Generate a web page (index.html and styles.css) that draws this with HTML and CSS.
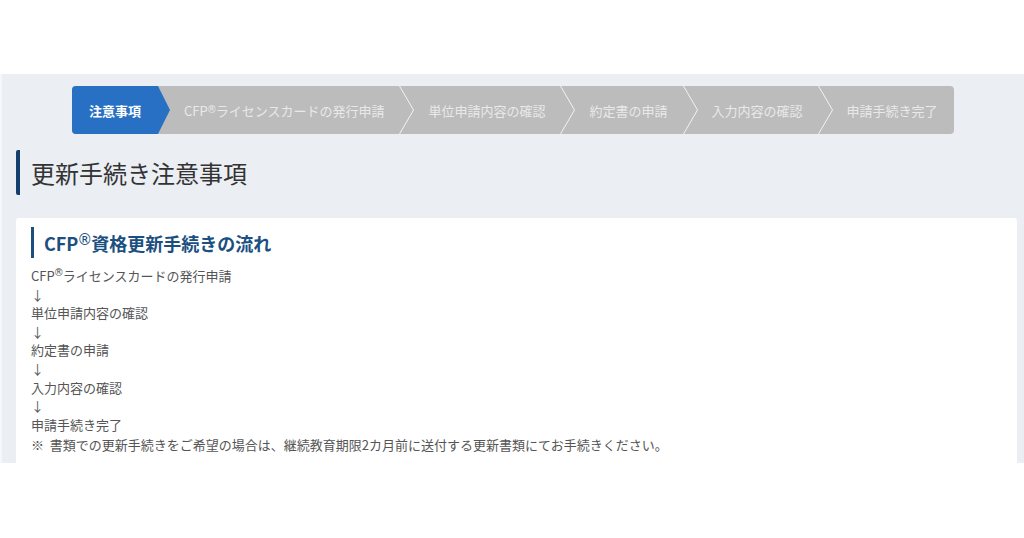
FILE: index.html
```html
<!DOCTYPE html>
<html lang="ja">
  <head>
    <meta charset="UTF-8" />
    <title>更新手続き注意事項</title>
    <link rel="stylesheet" href="styles.css">
  </head>
  <body>
    <div class="top-space"></div>

    <div class="screen">
      <!-- Progress steps -->
      <div class="steps">
        <div class="step active">注意事項</div>
        <div class="step">CFP<sup>®</sup>ライセンスカードの発行申請</div>
        <span class="sep"><svg viewBox="0 0 15 48" width="15" height="48"><polyline points="0.5,0 14.5,24 0.5,48" /></svg></span>
        <div class="step">単位申請内容の確認</div>
        <span class="sep"><svg viewBox="0 0 15 48" width="15" height="48"><polyline points="0.5,0 14.5,24 0.5,48" /></svg></span>
        <div class="step">約定書の申請</div>
        <span class="sep"><svg viewBox="0 0 15 48" width="15" height="48"><polyline points="0.5,0 14.5,24 0.5,48" /></svg></span>
        <div class="step">入力内容の確認</div>
        <span class="sep"><svg viewBox="0 0 15 48" width="15" height="48"><polyline points="0.5,0 14.5,24 0.5,48" /></svg></span>
        <div class="step last">申請手続き完了</div>
      </div>

      <!-- Page title -->
      <h1 class="page-title">更新手続き注意事項</h1>

      <!-- Card -->
      <div class="card">
        <h2 class="card-title">CFP<sup>®</sup>資格更新手続きの流れ</h2>
        <p class="flow">
          CFP<sup>®</sup>ライセンスカードの発行申請<br />
          ↓<br />
          単位申請内容の確認<br />
          ↓<br />
          約定書の申請<br />
          ↓<br />
          入力内容の確認<br />
          ↓<br />
          申請手続き完了
        </p>
        <p class="note">※&nbsp;&nbsp;書類での更新手続きをご希望の場合は、継続教育期限2カ月前に送付する更新書類にてお手続きください。</p>
      </div>
    </div>
  </body>
</html>
```

FILE: styles.css
```css
body {
  font-family: "Noto Sans CJK JP", "Noto Sans", sans-serif;
  background: #ffffff;
  margin: 0;
  padding: 0;
}

.top-space {
  height: 74px;
}

.screen {
  box-sizing: border-box;
  height: 389px;
  overflow: hidden;
  background: #ebeef3;
  border-left: 2px solid #f6f7f9;
  padding: 12px 7px 0 14px;
}

/* Steps bar */
.steps {
  display: inline-flex;
  height: 48px;
  margin-left: 56px;
  background: #bcbcbc;
  border-radius: 4px;
}

.step {
  display: flex;
  align-items: center;
  padding: 0 15px 0 14px;
  font-size: 13px;
  color: #e9e9e9;
  white-space: nowrap;
}

.step.active {
  padding: 0 29px 0 17px;
  background: #2770c4;
  color: #ffffff;
  font-weight: bold;
  border-radius: 4px 0 0 4px;
  clip-path: polygon(0 0, calc(100% - 12px) 0, 100% 50%, calc(100% - 12px) 100%, 0 100%);
}

.step.last {
  padding-right: 16px;
}

.step sup,
.flow sup {
  font-family: "DejaVu Sans", sans-serif;
  font-size: 10px;
  line-height: 0;
  margin: 0 0 0 -1px;
  letter-spacing: -1px;
}

.sep {
  display: flex;
}

.sep polyline {
  fill: none;
  stroke: #f2f2f2;
  stroke-width: 1;
}

/* Page title */
.page-title {
  margin: 16px 0 0 0;
  height: 45px;
  display: flex;
  align-items: center;
  border-left: 4px solid #123f6b;
  border-radius: 2px;
  padding-left: 11px;
  font-size: 24px;
  font-weight: normal;
  color: #333333;
}

/* Card */
.card {
  margin-top: 23px;
  background: #ffffff;
  border-radius: 3px;
  padding: 9px 15px 20px 15px;
  height: 400px;
}

.card-title {
  margin: 0;
  height: 31px;
  display: flex;
  align-items: center;
  border-left: 3px solid #1b4f80;
  padding-left: 10px;
  font-size: 18px;
  font-weight: bold;
  color: #1b4f80;
}

.card-title sup {
  font-family: "DejaVu Sans", sans-serif;
  font-size: 15px;
  font-weight: normal;
  line-height: 0;
  position: relative;
  top: -3px;
  margin: 0 -1px 0 -1px;
}

.flow {
  margin: 9px 0 0 0;
  font-size: 13px;
  line-height: 18.6px;
  color: #555555;
}

.note {
  margin: 2px 0 0 0;
  font-size: 13px;
  line-height: 18.6px;
  color: #555555;
}
```
